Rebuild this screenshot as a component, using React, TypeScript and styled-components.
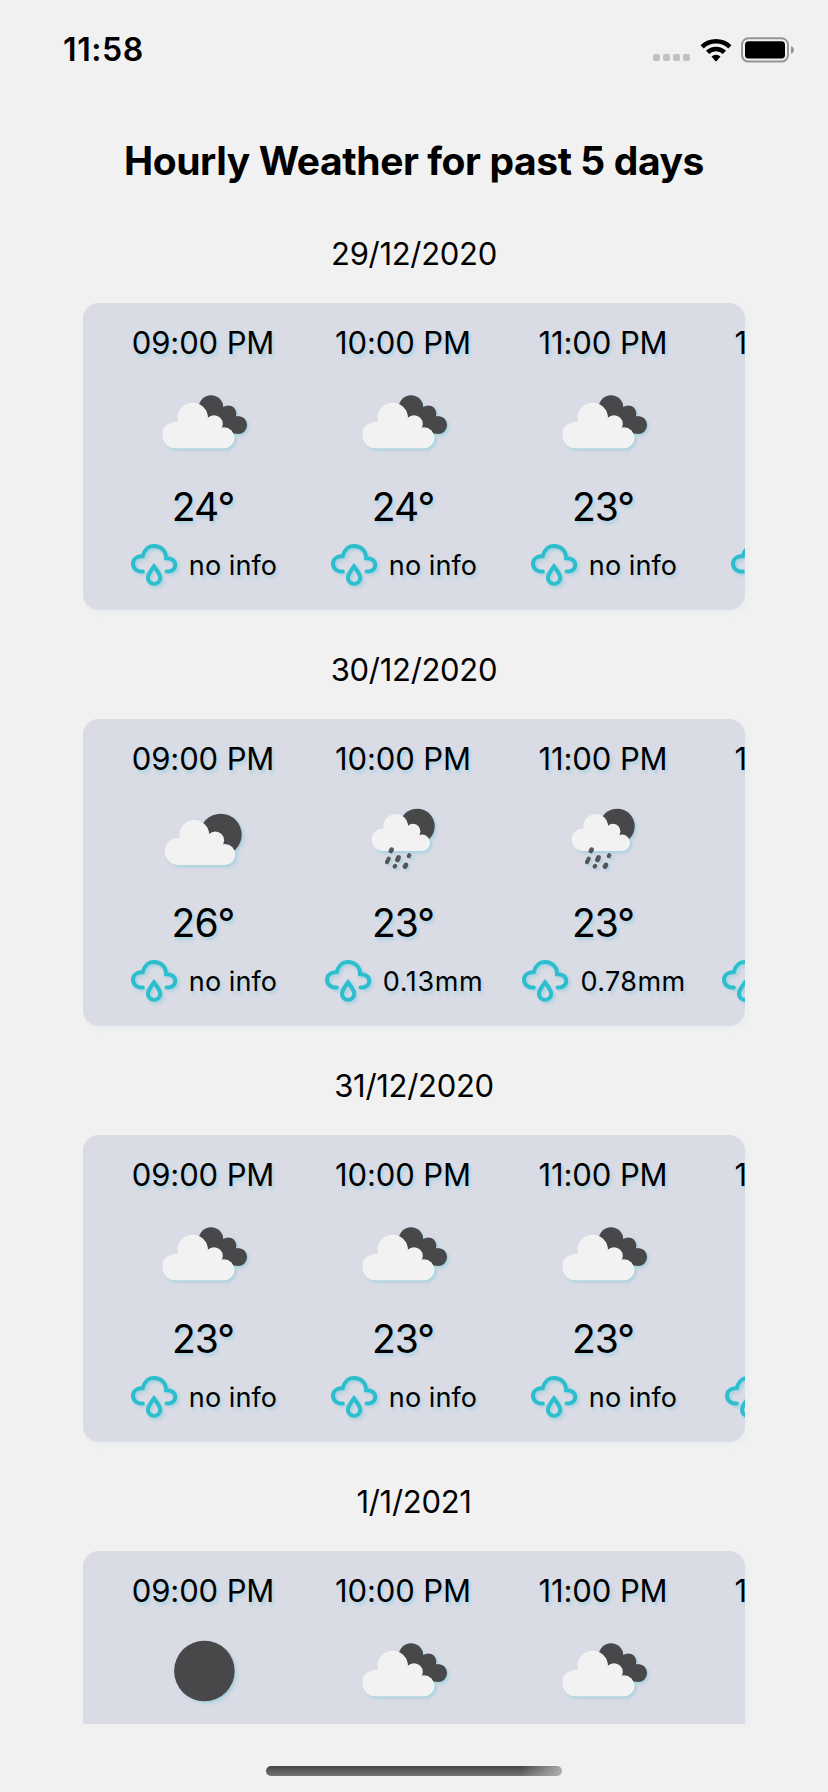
import React from "react";
import styled, { createGlobalStyle } from "styled-components";

const GlobalStyle = createGlobalStyle`
  * { box-sizing: border-box; }
  body {
    margin: 0;
    background: #f1f1f1;
    color: #000;
    font-family: Inter, "Liberation Sans", sans-serif;
    overflow: hidden;
  }
`;

const Screen = styled.div`
  width: 828px;
  height: 1792px;
  display: flex;
  flex-direction: column;
  background: #f1f1f1;
`;

const StatusBar = styled.header`
  height: 99px;
  flex: none;
  display: flex;
  align-items: center;
  justify-content: space-between;
  padding: 0 33px 0 63px;
`;

const Clock = styled.span`
  margin-top: 1px;
  font-size: 32px;
  font-weight: 600;
  line-height: 40px;
  letter-spacing: 0.6px;
`;

const StatusIcons = styled.div`
  display: flex;
  align-items: center;
`;

const Signal = styled.div`
  display: flex;
  gap: 3px;
  margin: 16px 10px 0 0;
`;

const SignalDot = styled.i`
  width: 7px;
  height: 7px;
  border-radius: 2px;
  background: #c1c1c1;
`;

const WifiIcon = styled.svg`
  width: 32px;
  height: 26px;
  margin-right: 9px;
`;

const BatteryIcon = styled.svg`
  width: 54px;
  height: 26px;
`;

const Title = styled.h1`
  flex: none;
  margin: 32px 0 0;
  font-size: 39px;
  font-weight: 700;
  line-height: 60px;
  letter-spacing: -0.4px;
  text-align: center;
`;

const DayList = styled.main`
  height: 1533px;
  flex: none;
  overflow: hidden;
`;

const Day = styled.section`
  height: 416px;
  padding: 43px 83px 0;
`;

const DateLabel = styled.h2`
  margin: 0 0 29px;
  font-size: 31px;
  font-weight: 400;
  line-height: 40px;
  letter-spacing: -0.3px;
  text-align: center;
`;

const Card = styled.div`
  height: 307px;
  padding: 20px 20px 0;
  display: flex;
  overflow: hidden;
  border-radius: 16px;
  background: #d9dbe5;
  box-shadow: inset 4px 4px 4px -1px #dddbe4, 3px 3px 4px rgba(173, 216, 230, 0.1);
`;

const Hour = styled.article`
  width: 200px;
  flex: none;
  display: flex;
  flex-direction: column;
  align-items: center;
  text-shadow: 2px 3px 3px rgba(120, 205, 225, 0.45);
  svg {
    filter: drop-shadow(2px 2px 1.5px rgba(110, 200, 220, 0.48));
  }
`;

const Time = styled.div`
  height: 40px;
  font-size: 31px;
  line-height: 40px;
  letter-spacing: -0.1px;
  white-space: nowrap;
`;

const WeatherIcon = styled.svg`
  width: 100px;
  height: 100px;
  margin: 7px 0 13px;
`;

const Temperature = styled.div`
  height: 48px;
  font-size: 39px;
  line-height: 48px;
  letter-spacing: -1px;
`;

const Rainfall = styled.div`
  height: 42px;
  margin-top: 13px;
  padding-left: 2px;
  display: flex;
  align-items: center;
  gap: 12px;
`;

const RainIcon = styled.svg`
  width: 46px;
  height: 42px;
  overflow: visible;
`;

const RainText = styled.span<{ $spacing: number }>`
  padding-top: 1px;
  font-size: 27px;
  line-height: 42px;
  white-space: nowrap;
  letter-spacing: ${(p) => p.$spacing}px;
`;

const HomeArea = styled.footer`
  flex: 1;
  display: flex;
  justify-content: center;
  padding-top: 42px;
`;

const HomeBar = styled.div`
  width: 296px;
  height: 10px;
  border-radius: 5px;
  background: linear-gradient(100deg, transparent 86%, #b5b5b5 101%),
    linear-gradient(#454545, #747474);
`;

type Sky = "broken" | "few" | "rain" | "clear";

const DARK = "#48484a";
const LIGHT = "#f2f2f2";

function SkyIcon({ sky }: { sky: Sky }) {
  return (
    <WeatherIcon viewBox="1 0 100 100">
      {sky === "clear" && <circle cx="52.4" cy="53" r="30.3" fill={DARK} />}
      {sky === "broken" && (
        <>
          <g fill={DARK}>
            <circle cx="59" cy="37.5" r="12.2" />
            <circle cx="76.4" cy="43.5" r="8" />
            <circle cx="86" cy="55" r="9.1" />
            <path d="M59 49 70 36l13 8 4 10-5 10-12-2z" />
          </g>
          <g fill={LIGHT}>
            <circle cx="23.6" cy="65" r="13.3" />
            <circle cx="40.7" cy="48" r="15.3" />
            <circle cx="62" cy="54" r="8.8" />
            <circle cx="72" cy="67.8" r="10.5" />
            <path d="M23.6 78.3V52l14-4 24 3 10 12v15.3z" />
          </g>
        </>
      )}
      {sky === "few" && (
        <>
          <circle cx="68.7" cy="48.7" r="21" fill={DARK} />
          <g fill={LIGHT}>
            <circle cx="26.2" cy="65.5" r="13.5" />
            <circle cx="42.3" cy="49" r="15" />
            <circle cx="63.3" cy="54.3" r="8.8" />
            <circle cx="72.8" cy="68.5" r="10.5" />
            <path d="M26.2 79V53l14-4 24 3 9 12v15z" />
          </g>
        </>
      )}
      {sky === "rain" && (
        <>
          <circle cx="65.2" cy="40.2" r="17.5" fill={DARK} />
          <g fill={LIGHT}>
            <circle cx="31" cy="53.7" r="11.3" />
            <circle cx="43.7" cy="40.3" r="12.3" />
            <circle cx="61" cy="45.2" r="7.4" />
            <circle cx="69.8" cy="56.8" r="8.3" />
            <path d="M31 65V43l12-3 19 3 8 10v12z" />
          </g>
          <g stroke={DARK} strokeWidth="4" strokeLinecap="round" opacity="0.9">
            <path d="M39.6 63.6 38.9 65" strokeWidth="4.6" />
            <path d="M36.7 72.6 35 76.2" />
            <path d="M46.5 71.4 45.5 73.8" strokeWidth="4.8" />
            <path d="M57.3 69.2 56.7 70.2" />
            <path d="M43.1 79.8 42.6 80.6" />
            <path d="M53.8 79 53 80.6" strokeWidth="4.8" />
          </g>
        </>
      )}
    </WeatherIcon>
  );
}

function CloudDrop() {
  return (
    <RainIcon viewBox="0 0 46 42" fill="none" stroke="#2dbecd" strokeWidth="4" strokeLinecap="round">
      <path d="M11.8 27.5C5.8 28 2 24.2 2 19.7C2 15.3 5.5 12.2 11.8 12C13.2 6 17.6 2 23 2C29.8 2 35.3 7 35 14.2C40.5 13.9 44.2 16.8 44.2 20.9C44.2 25 40.8 27.9 35.5 27.5" />
      <path d="M23 22.3C19.5 27 16.9 30.3 16.9 33.7A6.15 6.15 0 0 0 29.2 33.7C29.2 30.3 26.5 27 23 22.3Z" />
    </RainIcon>
  );
}

interface HourData {
  time: string;
  sky: Sky;
  temp: number;
  rain: string;
}

const TIMES = ["09:00 PM", "10:00 PM", "11:00 PM", "12:00 AM"];

const RAIN_SPACING: Record<string, number> = {
  "no info": 0.1,
  "0.13mm": 0.6,
  "0.78mm": 0.4,
};

const hours = (skies: Sky[], temps: number[], rain: (string | undefined)[] = []): HourData[] =>
  TIMES.map((time, i) => ({ time, sky: skies[i], temp: temps[i], rain: rain[i] ?? "no info" }));

const cloudy: Sky[] = ["broken", "broken", "broken", "broken"];

const DAYS = [
  { date: "29/12/2020", hours: hours(cloudy, [24, 24, 23, 23]) },
  {
    date: "30/12/2020",
    hours: hours(["few", "rain", "rain", "rain"], [26, 23, 23, 23], [undefined, "0.13mm", "0.78mm", "0.78mm"]),
  },
  {
    date: "31/12/2020",
    hours: hours(cloudy, [23, 23, 23, 23], [undefined, undefined, undefined, "0.13mm"]),
  },
  { date: "1/1/2021", hours: hours(["clear", "broken", "broken", "broken"], [23, 23, 23, 23]) },
];

export default function App() {
  return (
    <Screen>
      <GlobalStyle />
      <StatusBar>
        <Clock>11:58</Clock>
        <StatusIcons>
          <Signal>
            <SignalDot />
            <SignalDot />
            <SignalDot />
            <SignalDot />
          </Signal>
          <WifiIcon viewBox="0 0 32 26">
            <path d="M0.5 8.2A22.3 22.3 0 0 1 31.5 8.2L28.3 11.4A17.8 17.8 0 0 0 3.7 11.4Z" />
            <path d="M6 13.7A14.5 14.5 0 0 1 26 13.7L22.8 16.9A9.9 9.9 0 0 0 9.2 16.9Z" />
            <path d="M11.5 19.4A6.6 6.6 0 0 1 20.5 19.4L16.7 23.9Q16 24.7 15.3 23.9Z" />
          </WifiIcon>
          <BatteryIcon viewBox="0 0 54 26">
            <rect x="1" y="1.2" width="46" height="23.4" rx="6.5" fill="none" stroke="#969696" strokeWidth="2" />
            <rect x="4" y="4.2" width="40" height="17.4" rx="3.5" />
            <path d="M50 9.2Q53 10.2 53 13T50 16.8Z" fill="#969696" />
          </BatteryIcon>
        </StatusIcons>
      </StatusBar>
      <Title>Hourly Weather for past 5 days</Title>
      <DayList>
        {DAYS.map((day) => (
          <Day key={day.date}>
            <DateLabel>{day.date}</DateLabel>
            <Card>
              {day.hours.map((h) => (
                <Hour key={h.time}>
                  <Time>{h.time}</Time>
                  <SkyIcon sky={h.sky} />
                  <Temperature>{h.temp}°</Temperature>
                  <Rainfall>
                    <CloudDrop />
                    <RainText $spacing={RAIN_SPACING[h.rain]}>{h.rain}</RainText>
                  </Rainfall>
                </Hour>
              ))}
            </Card>
          </Day>
        ))}
      </DayList>
      <HomeArea>
        <HomeBar />
      </HomeArea>
    </Screen>
  );
}
